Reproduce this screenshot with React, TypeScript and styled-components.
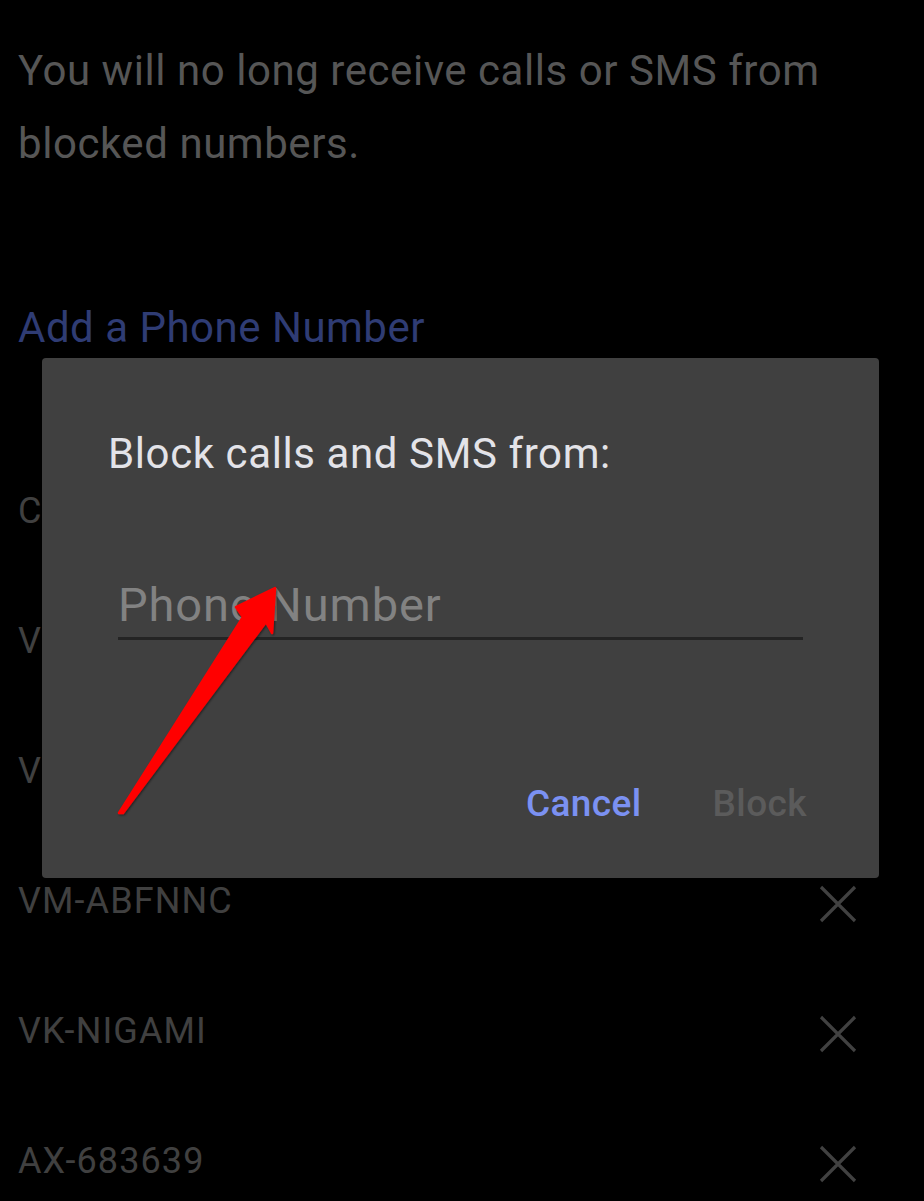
import React from "react";
import styled, { createGlobalStyle } from "styled-components";

const GlobalStyle = createGlobalStyle`
  html, body {
    margin: 0;
    padding: 0;
    background: #000;
  }
  body {
    font-family: Roboto, "Noto Sans", "Liberation Sans", sans-serif;
    -webkit-font-smoothing: antialiased;
  }
`;

const Screen = styled.div`
  position: relative;
  width: 924px;
  height: 1201px;
  overflow: hidden;
  background: #000;
  box-sizing: border-box;
  padding: 34px 18px 0 18px;
  display: flex;
  flex-direction: column;
`;

const Intro = styled.p`
  margin: 0;
  font-size: 42px;
  letter-spacing: 0.55px;
  line-height: 73px;
  color: #565656;
  width: 860px;
`;

const AddLink = styled.a`
  display: block;
  margin-top: 124px;
  font-size: 42px;
  letter-spacing: 0.5px;
  line-height: 48px;
  color: #2f3c74;
  text-decoration: none;
`;

const List = styled.ul`
  list-style: none;
  margin: 94px 0 0 0;
  padding: 0;
`;

const Row = styled.li`
  height: 130px;
  display: flex;
  align-items: center;
  justify-content: space-between;
  padding-right: 49px;
`;

const Sender = styled.span`
  font-size: 36px;
  letter-spacing: 1.1px;
  color: #404040;
`;

const RemoveButton = styled.button`
  border: 0;
  background: none;
  padding: 0;
  width: 38px;
  height: 38px;
  display: flex;
  align-items: center;
  justify-content: center;
  margin-top: 6px;
`;

const Dialog = styled.div`
  position: absolute;
  top: 358px;
  left: 42px;
  width: 837px;
  height: 520px;
  background: #404040;
  border-radius: 4px;
  box-sizing: border-box;
  padding: 72px 76px 0 66px;
  display: flex;
  flex-direction: column;
`;

const DialogTitle = styled.h2`
  margin: 0;
  font-weight: 400;
  font-size: 42px;
  letter-spacing: 0.6px;
  line-height: 48px;
  color: #e3e3e8;
`;

const PhoneInput = styled.input`
  margin: 97px 0 0 10px;
  padding: 0 0 4px 0;
  background: transparent;
  border: 0;
  border-bottom: 3px solid #242424;
  font-family: inherit;
  font-size: 47px;
  letter-spacing: 0.9px;
  line-height: 54px;
  height: 58px;
  color: #e3e3e8;
  outline: none;
  &::placeholder {
    color: #828282;
  }
`;

const Actions = styled.div`
  margin-top: 143px;
  display: flex;
  justify-content: flex-end;
  gap: 71px;
  margin-right: -4px;
`;

const ActionButton = styled.button<{ $tone: "primary" | "disabled" }>`
  border: 0;
  background: none;
  padding: 0;
  font-family: inherit;
  font-weight: 500;
  font-size: 37px;
  letter-spacing: 0.4px;
  line-height: 42px;
  color: ${(p) => (p.$tone === "primary" ? "#7b91f2" : "#5b5b5b")};
`;

const Pointer = styled.svg`
  position: absolute;
  left: 0;
  top: 0;
  pointer-events: none;
`;

const senders = ["CP-MYAIRT", "VM-HDFCBK", "VK-AMAZON", "VM-ABFNNC", "VK-NIGAMI", "AX-683639"];

const CloseIcon = () => (
  <svg width="38" height="38" viewBox="0 0 38 38">
    <path d="M2 2 L36 36 M36 2 L2 36" stroke="#414141" strokeWidth="3.2" />
  </svg>
);

export default function App() {
  return (
    <>
      <GlobalStyle />
      <Screen>
        <Intro>You will no long receive calls or SMS from blocked numbers.</Intro>
        <AddLink>Add a Phone Number</AddLink>
        <List>
          {senders.map((s) => (
            <Row key={s}>
              <Sender>{s}</Sender>
              <RemoveButton aria-label={`Remove ${s}`}>
                <CloseIcon />
              </RemoveButton>
            </Row>
          ))}
        </List>

        <Dialog>
          <DialogTitle>Block calls and SMS from:</DialogTitle>
          <PhoneInput placeholder="Phone Number" />
          <Actions>
            <ActionButton $tone="primary">Cancel</ActionButton>
            <ActionButton $tone="disabled">Block</ActionButton>
          </Actions>
        </Dialog>

        <Pointer width="924" height="1201" viewBox="0 0 924 1201">
          <defs>
            <filter id="arrowShadow" x="-20%" y="-20%" width="140%" height="140%">
              <feDropShadow dx="1" dy="1" stdDeviation="1.2" floodColor="#000" floodOpacity="0.5" />
            </filter>
          </defs>
          <polygon
            points="119,813 243,617 236,607 275,588 272,633 266,622 123,813"
            fill="#ff0000"
            stroke="#ff0000"
            strokeWidth="2.5"
            strokeLinejoin="round"
            filter="url(#arrowShadow)"
          />
        </Pointer>
      </Screen>
    </>
  );
}
